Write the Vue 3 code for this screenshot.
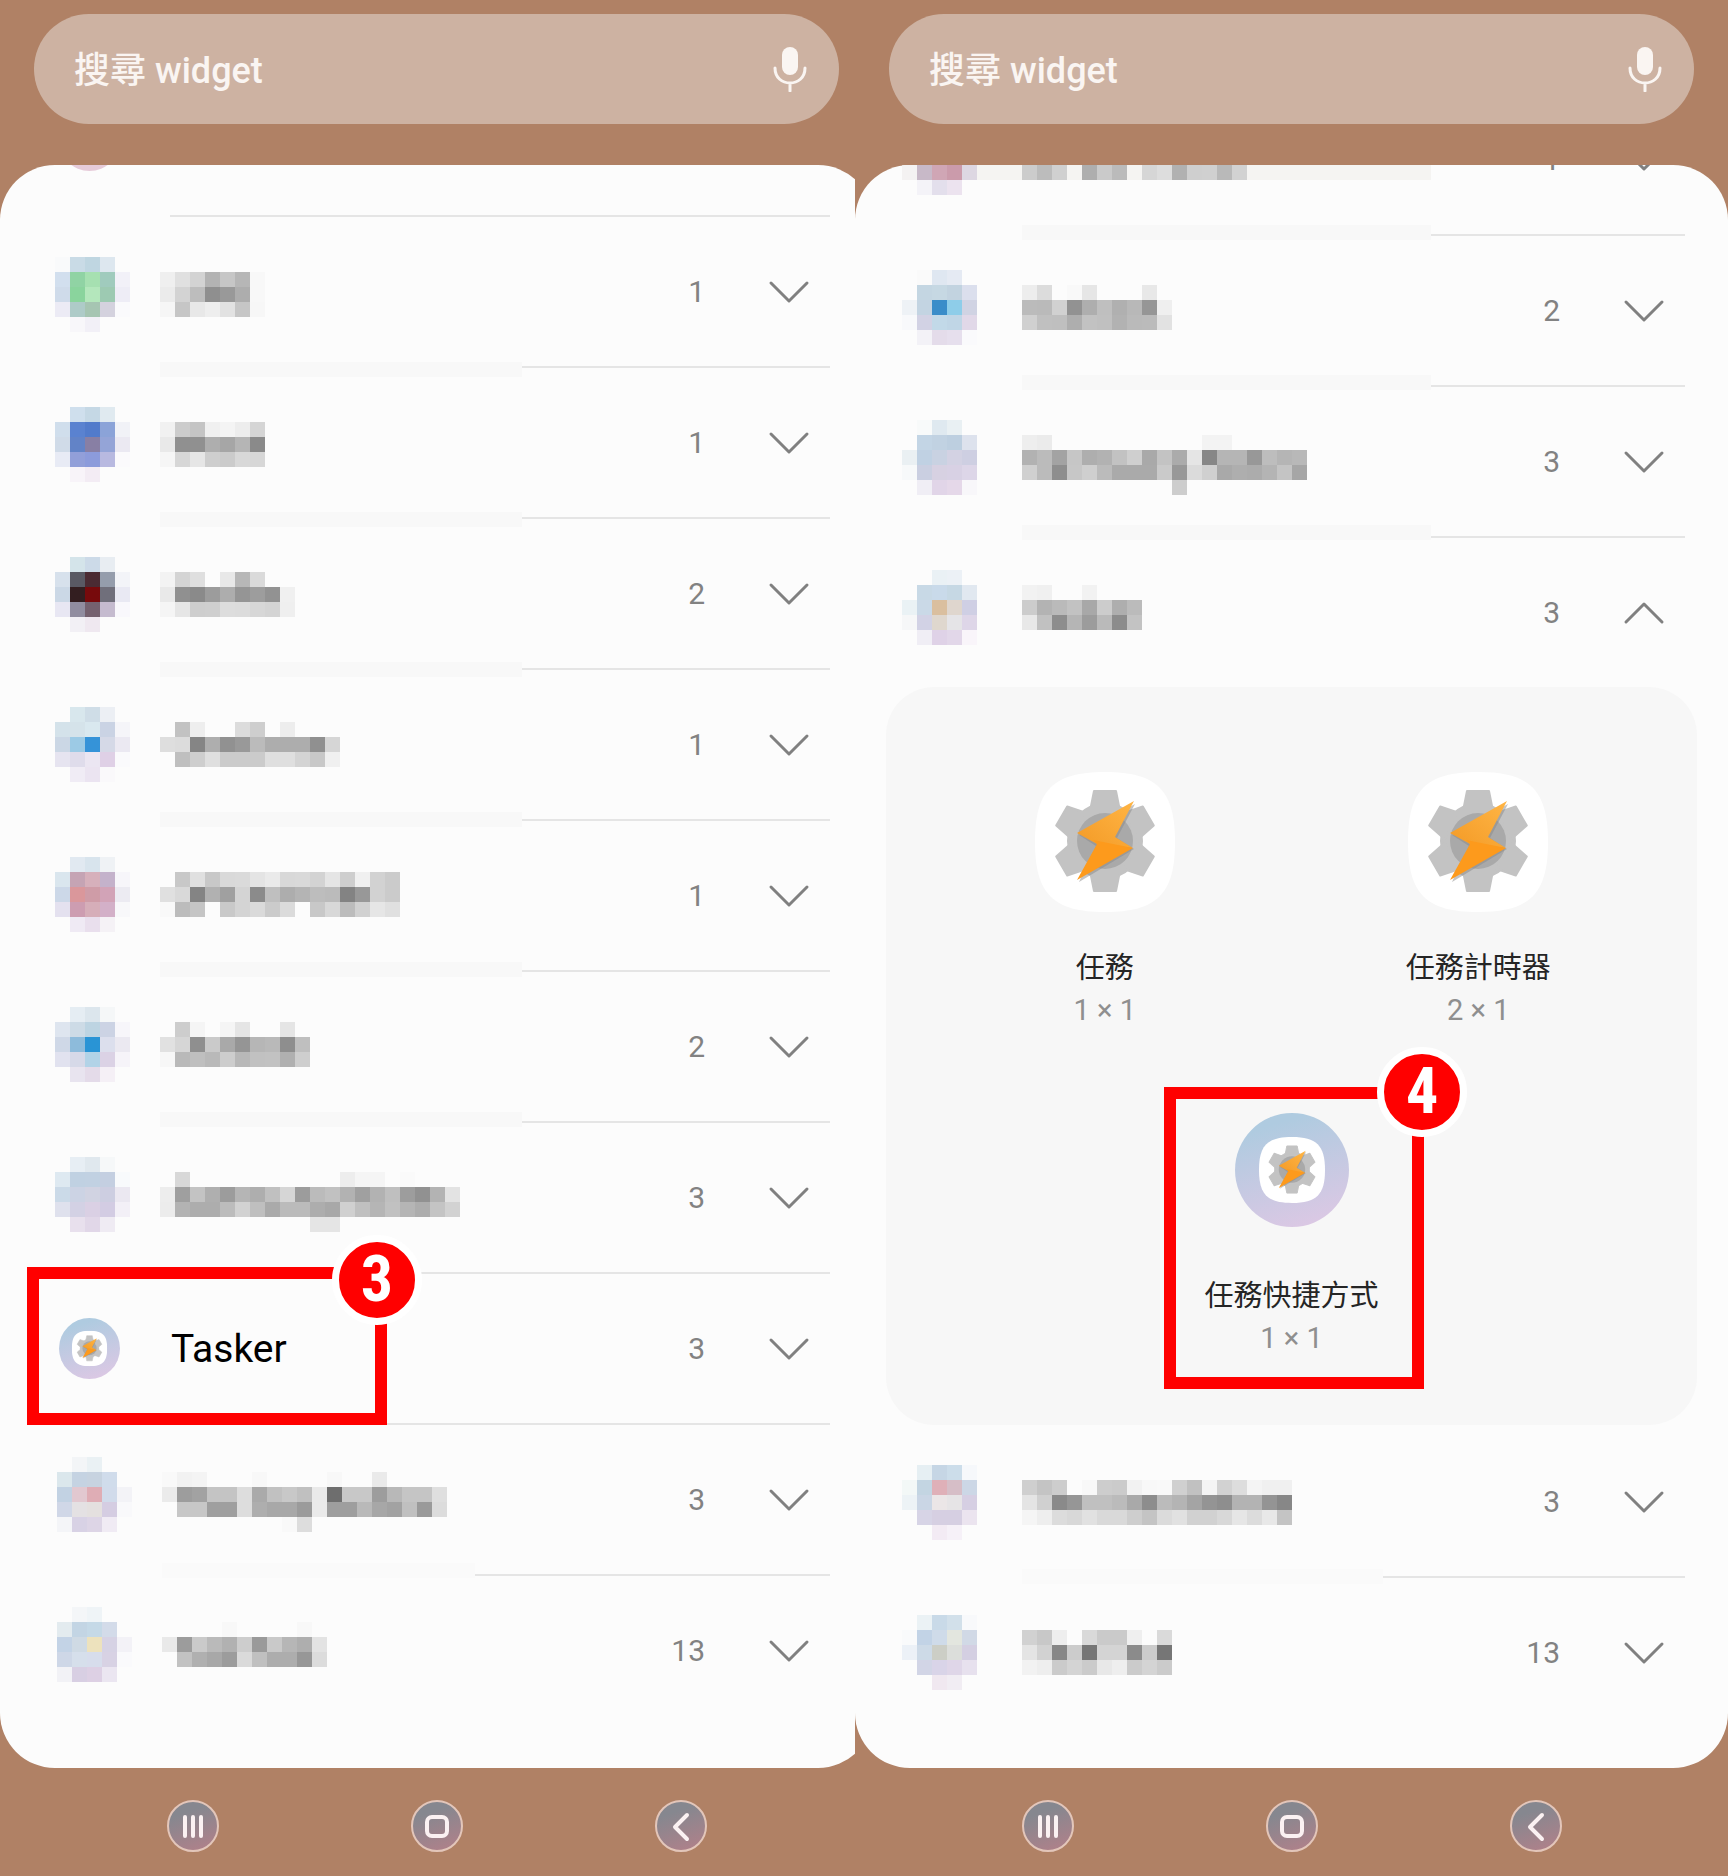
<script setup>
const CELL = 15

// Colour rows for the pixelated app icons; "-" leaves a cell empty.
// Names use two-digit grey levels; ".." leaves a cell empty.
const leftRows = [
  { count: '', art: 'plain' },
  {
    count: 1, top: 42,
    icon: ['f9fafb c9dbe6 bfd6e1 dde7ef -', 'd2dfee 90d3a4 a6e0b1 a0cbbd f2f1f8', 'cfdbea 8ad49d b4e7bc 9dcab2 eeedf6', 'ecebf5 aecbc8 a6c5b2 d4d2de fafafc', '- f8f7fa f2f0f7 - -'],
    name: ['ef e0 d3 b3 c6 b6 f8', 'eb d3 bd 8f 99 ad f8', 'f6 c6 e8 ee e2 c6 f7'],
  },
  {
    count: 1, top: 41, strip: -4,
    icon: ['- cfdfed c5d8e5 e0eaf0 -', 'd0deec 5a82d0 527bcb 8ba3d8 f1f2f7', 'd0dbe8 6283c7 887fa4 94a4d7 ebe9f2', 'e8ebf5 929fd9 8c9bdb b8b9e0 fbfafc', '- f8f4f9 f3ecf4 - -'],
    name: ['f1 cc c4 f0 f4 ed d5', 'e9 90 90 ae a6 b5 8a', 'f6 d7 e6 ce cb d8 d7'],
  },
  {
    count: 2, top: 40, strip: -5,
    icon: ['- d4e4ea ccdae8 e8edf2 -', 'd7e1ec 595963 4b2b33 959dac f3f4f8', 'cbd8e6 331e20 770a0c 706f7b e9e9f3', 'e8e7f3 918da0 75616f c5bbcf f9f8fc', '- f2f0f5 efe8f0 - -'],
    name: ['f3 d4 df .. e8 b7 da', 'e9 90 8a 9c ad 95 9d 92 f0', 'f5 e6 ce cf dd dc d7 d4 ef'],
  },
  {
    count: 1, top: 39, strip: -6,
    icon: ['- d8e7ed cfdde7 eceff4 -', 'd4e2ea d5e3ea d9e8ef cad3e4 f5f5f9', 'cbd7e5 9ccae5 3593d8 d5d9e7 ebe9f2', 'e6e4f0 dfdceb ebe6f2 dfd0e6 fafafc', '- f0ecf5 ebe4f1 faf9fb -'],
    name: ['.. c2 ee .. .. dc ce .. ed', 'de dc 85 ae 91 99 bb ad ad ad 90 d6', '.. bf ce df cb cb cb df df d4 c8 f0'],
  },
  {
    count: 1, top: 38, strip: -7,
    icon: ['- e1e9f1 d8e4ed eff2f5 -', 'dae6ee c5a4b4 d6b0bb c4b2cb f7f6fa', 'ccd8e8 da979b cf9ca7 d2a3b7 ecebf2', 'e4e1ef cd9db1 d6aeb9 d3b0c8 f8f8fa', '- efeaf4 e9dfed f5f2f6 -'],
    name: ['.. c8 e0 c8 d9 da e4 ea d8 d9 d3 e5 ce f0 d2 cb', 'e0 d9 84 b1 a0 d4 8b bf ad b4 bd bb 83 98 d2 cb', 'f9 bc c5 .. c9 d4 da cb db .. c8 d8 bc d1 e6 e0'],
  },
  {
    count: 2, top: 37, strip: -8,
    icon: ['- e5edf3 dce6ed f5f7f8 -', 'dee5ef cddbe6 bdd4e2 ccd3e4 f7f6fa', 'cfd8e7 8dbbdb 2994d5 dcdfed ebe9f1', 'e1e2ef d6d9e8 b2d3e7 dbd2e5 f6f4f9', '- e8e4ef e4dbe9 f5f0f6 -'],
    name: ['.. cd f5 .. f5 e5 .. .. e5', 'e1 d6 8f ca a9 95 b6 b9 8e bf', 'f7 b9 bf b9 cd b8 c1 c2 b0 ce'],
  },
  {
    count: 3, top: 36, strip: -9,
    icon: ['- e7eef4 e0e8ee f6f8f9 -', 'dee9f1 c0d1e2 c1d1e2 c4cfe1 f8fafc', 'cbdae8 ccd3e4 d1d3e2 cdcee1 ebe8f1', 'dfe1ed d3d1e4 dad0e4 d3cce3 f3f0f7', '- e8e0ed e1d7e8 efebf3 -'],
    name: ['.. d8 .. .. .. .. .. .. .. .. .. .. ed f5 f5 .. fa', 'ed 9f c3 af 9c b5 ae c0 d6 9c bb c1 b2 a0 b2 bf 9d 91 b3 e3', 'ec b3 ad ad bc d2 bf aa bb bb ad a8 d0 c0 b5 c1 b5 ad c4 d2', '.. .. .. .. .. .. .. .. .. .. e5 e5'],
  },
  { count: 3, label: 'Tasker', art: 'tasker', step: 3 },
  {
    count: 3, top: 34, x: 2,
    icon: ['- f3f5f7 eaf1f4 - -', 'dbe7ec c5d3e2 c7d3e0 d0dceb -', 'c2d2e3 e2c8d0 dfadb5 d1dbeb f3f3f7', 'd0d7e7 e4e1e3 e4e0df d5cde2 f9f9fb', 'f4f5f8 d8d2e5 ddd5e6 f0ebf4 -'],
    name: ['f9 f2 f4 .. .. .. f8 .. .. .. .. f8 .. .. ea', 'eb 9d a2 c4 c4 dd aa c1 c8 c0 ea 6e c8 c8 9d b8 c5 c5 df', '.. c7 c7 9f 9f dd ae a8 a8 9b ea 9e 9e b9 a7 a2 c0 9a dc', '.. .. .. .. .. .. .. .. f9 dd'],
  },
  {
    count: 13, top: 33, x: 2, strip: -11, stripEnd: 475,
    icon: ['- f4f6f8 eff4f7 - -', 'e3ebef c3d5e4 c5d9e7 d3dbe9 -', 'c3d3e6 cfdae4 ede2bd d6d2e4 f3f2f7', 'ced7e7 d6dfeb d7ddec d8d2e4 fafafc', 'f2f2f6 d8cfe3 ddd0e4 ebe6f1 -'],
    name: ['.. .. .. .. f8 .. .. .. .. f8', 'e9 9c ca ba b1 cd 9a c9 b6 ae e3', '.. c2 b0 a8 9c da c0 ad ad 97 dc'],
  },
]

const rightRows = [
  {
    count: 1, top: 82, nameTop: 82, band: true,
    icon: ['f4f2f2 c8b9c8 d0a6b5 cb9bab ddd7e2', '- f4f3f8 e3dfec ece3ef -'],
    name: ['cc bc d0 .. ae ca bb .. d6 dd b1 cf d0 b9 d2'],
  },
  {
    count: 2, top: 36, strip: -9,
    icon: ['- fafafa dfe7f1 e5eaf3 -', '- c4d6e2 c6d8e3 c2d3e0 dbdfed', 'eef2f6 c3d4e2 3a8dc9 8ecde9 d0d3e3', 'f8f9fb d2d2e4 c2d9e8 c0d6e6 e1d8e8', '- f3f2f7 e4dcea e6dfed fafafc'],
    name: ['ed dc .. f9 e6 .. .. .. e8', 'bb ba d1 92 ae bf b0 b8 96 ef', 'd0 c0 bf ae c2 c0 b2 ba bb e2'],
  },
  {
    count: 3, top: 35, strip: -10,
    icon: ['- f8fafa dfe9f0 e9f0f3 -', '- c3d5e5 c1d2e2 bdcfe0 dde2ed', 'eaf0f3 c0d1e3 c9d2e2 d3d2e3 cecfe2', 'f7f9fa cacfe1 d7d1e2 d8d1e4 ddd6e8', '- f0eef5 e1d5e8 e5d8e9 f8f7fa'],
    name: ['ee eb .. .. .. .. .. .. .. .. .. .. f3 f3', 'b2 bb a3 c6 ae b2 c2 cf a9 c3 ab e5 87 b5 b5 98 bd b5 b8', 'd0 bb 8e c7 cf bb aa aa aa ca 98 db d0 a9 ae ac b4 c4 a6', '.. .. .. .. .. .. .. .. .. .. cd'],
  },
  {
    count: 3, top: 34, strip: -11, open: true,
    icon: ['- - eaf1f5 ecf1f6 -', '- c8d9e6 c9daea c6d8e4 e1e8f0', 'eaf2f5 cad9e7 dabf9f dfd6ce cfcfe4', 'f6f7f8 d2d2e5 dfd7ce e5e4e7 ded6e8', '- f0eef5 dfd2e7 e2d7e9 f9f5fa'],
    name: ['f2 f0 .. .. f2', 'cc b3 ba c2 a8 cc ae bb', 'e8 c1 8d b5 9c ba 8c c3'],
  },
  {
    count: 3, top: 40, bare: true,
    icon: ['- e6eff3 c6d6e5 ccddea f6f8fb', 'f3f8f7 c3d5e2 dfb0b8 d6bec7 ccd7e6', 'edf3f6 cad6e5 ebe6e7 e6e4e6 d6cfe3', '- d7d4e6 d6cfe2 d6cfe2 ebe4ef', '- - f3ebf4 f6f1f8 -'],
    name: ['cf c4 cd .. f8 cd cb f2 f8 f9 d0 c1 f4 d2 dd f4 f0 f0', 'e4 d0 8a 96 c0 c0 bb a9 8d bb b4 a4 94 8e b3 b3 94 87', 'f5 ee dc d8 e1 d9 d9 ce c4 db e1 d1 d1 d8 e6 dc e8 c4'],
  },
  {
    count: 13, top: 39, strip: -7, stripEnd: 528,
    icon: ['- ebf2f5 c9dae8 d2e0ea f8f9fb', 'f9fafb c2d3e6 cfdbe9 e3e6df d1d9e6', 'ecf1f7 cddae7 cccec6 dcdedb d4cfe2', '- d2d5e6 d9d4e8 dfd6e8 e7e1ee', '- - f0e8f0 f1edf3 -'],
    name: ['d1 c8 ee .. d9 ca ca ef .. da', 'e4 d2 87 cc 76 d4 d4 8b cc 76', 'f2 ee cb d4 cb e8 ee cb d4 cb'],
  },
]

const widgets = [
  { label: '任務', size: '1 × 1' },
  { label: '任務計時器', size: '2 × 1' },
  { label: '任務快捷方式', size: '1 × 1', round: true, step: 4 },
]

const screens = [
  { id: 'left', rows: leftRows, iconX: 55, nameX: 160, stripEnd: 522 },
  { id: 'right', rows: rightRows, iconX: 47, nameX: 167, stripEnd: 576 },
]

function cells(lines, x, y, toColor) {
  return lines.flatMap((line, r) =>
    line.split(' ').flatMap((token, c) =>
      token === '-' || token === '..' ? [] : [{ x: x + c * CELL, y: y + r * CELL, w: CELL, h: CELL, fill: toColor(token) }]
    )
  )
}

function mosaic(row, screen) {
  if (!row.icon) return []
  const dx = row.x || 0
  const out = []
  if (row.strip) {
    const x = screen.nameX + dx
    const end = row.stripEnd || screen.stripEnd
    out.push({ x, y: row.strip, w: end - x, h: CELL, fill: row.stripEnd ? '#fafafa' : '#f8f8f8' })
  }
  if (row.band) out.push({ x: screen.iconX, y: row.top, w: screen.stripEnd - screen.iconX, h: CELL, fill: '#f5f4f2' })
  return out.concat(
    cells(row.icon, screen.iconX + dx, row.top, (t) => '#' + t),
    cells(row.name, screen.nameX + dx, row.nameTop || row.top + CELL, (t) => '#' + t + t + t)
  )
}
</script>

<template>
  <svg class="defs" aria-hidden="true">
    <defs>
      <linearGradient id="bolt-top" x1="0" y1="1" x2="1" y2="0">
        <stop offset="0" stop-color="#f39a26" />
        <stop offset="1" stop-color="#ffb545" />
      </linearGradient>
      <linearGradient id="halo" x1="0.3" y1="0" x2="0.6" y2="1">
        <stop offset="0.1" stop-color="#afcbe0" />
        <stop offset="1" stop-color="#dbc8e4" />
      </linearGradient>
      <symbol id="tasker-tile" viewBox="0 0 140 140">
        <path d="M70 0C122 0 140 18 140 70C140 122 122 140 70 140C18 140 0 122 0 70C0 18 18 0 70 0Z" fill="#fff" />
        <g fill="#c3c3c3" stroke="#c3c3c3" stroke-width="2" stroke-linejoin="round">
          <circle cx="70" cy="69" r="37" />
          <path v-for="a in 6" :key="a" d="M59 19H81L85 39H55Z" :transform="`rotate(${a * 60} 70 69)`" />
        </g>
        <circle cx="70" cy="69" r="28" fill="#a9a9a9" />
        <path d="M100 32L82 66L99 77L44 110L61 74L44 63Z" fill="#8a8a8a" opacity="0.5" />
        <path d="M99 29L42 61L62 72L98 76L80 65Z" fill="url(#bolt-top)" />
        <path d="M58 68L98 76L42 108L62 72Z" fill="#fd9a1c" />
      </symbol>
      <symbol id="tasker-round" viewBox="0 0 114 114">
        <circle cx="57" cy="57" r="57" fill="url(#halo)" />
        <use href="#tasker-tile" x="24" y="24" width="66" height="66" />
      </symbol>
    </defs>
  </svg>

  <main class="board">
    <section v-for="screen in screens" :key="screen.id" class="screen">
      <div class="phone" :class="screen.id">
        <header class="top">
          <label class="search">
            <input type="text" placeholder="搜尋 widget" aria-label="搜尋 widget" />
            <svg class="mic" viewBox="0 0 36 46" aria-hidden="true">
              <rect x="10" y="1" width="16" height="28" rx="8" fill="#faf5f2" />
              <path d="M3 22C3 42 33 42 33 22M18 37V45" fill="none" stroke="#faf5f2" stroke-width="3" stroke-linecap="round" />
            </svg>
          </label>
        </header>

        <div class="sheet">
          <ul class="list">
            <li v-for="(row, i) in screen.rows" :key="i" class="item" :class="{ bare: row.bare }">
              <button class="row" type="button" :aria-expanded="row.open ? 'true' : 'false'" :aria-label="row.label">
                <span class="icon">
                  <svg v-if="row.art === 'tasker'" viewBox="0 0 114 114"><use href="#tasker-round" /></svg>
                  <svg v-else-if="row.art" viewBox="0 0 114 114"><circle cx="57" cy="57" r="57" fill="#e6cbd9" /></svg>
                </span>
                <span class="name">{{ row.label }}</span>
                <span class="count">{{ row.count }}</span>
                <svg class="chevron" viewBox="0 0 44 24" aria-hidden="true">
                  <path :d="row.open ? 'M4 21L22 3L40 21' : 'M4 3L22 21L40 3'" />
                </svg>
              </button>
              <svg v-if="row.icon" class="mosaic" shape-rendering="crispEdges" aria-hidden="true">
                <rect v-for="(c, k) in mosaic(row, screen)" :key="k" :x="c.x" :y="c.y" :width="c.w" :height="c.h" :fill="c.fill" />
              </svg>
              <div v-if="row.step" class="mark row-mark"><span class="step">{{ row.step }}</span></div>

              <ul v-if="row.open" class="widgets">
                <li v-for="w in widgets" :key="w.label" class="widget">
                  <span class="tile">
                    <svg v-if="w.round" class="round" viewBox="0 0 114 114"><use href="#tasker-round" /></svg>
                    <svg v-else class="square" viewBox="0 0 140 140"><use href="#tasker-tile" /></svg>
                  </span>
                  <span class="label">{{ w.label }}</span>
                  <span class="size">{{ w.size }}</span>
                  <div v-if="w.step" class="mark widget-mark"><span class="step">{{ w.step }}</span></div>
                </li>
              </ul>
            </li>
          </ul>
        </div>

        <nav class="nav">
          <button type="button" aria-label="Recents">
            <svg viewBox="0 0 48 48"><path d="M16 15V34M24 15V34M32 15V34" /></svg>
          </button>
          <button type="button" aria-label="Home">
            <svg viewBox="0 0 48 48"><rect x="14" y="15" width="20" height="19" rx="5" /></svg>
          </button>
          <button type="button" aria-label="Back">
            <svg viewBox="0 0 48 48"><path d="M30 13L18 25L30 37" /></svg>
          </button>
        </nav>
      </div>
    </section>
  </main>
</template>

<style>
body {
  margin: 0;
  background: #b08165;
}
</style>

<style scoped>
.defs {
  position: absolute;
  width: 0;
  height: 0;
}
.board {
  display: grid;
  grid-template-columns: 855fr 873fr;
  font-family: Roboto, "Noto Sans CJK TC", sans-serif;
  background: #b08165;
}
.screen {
  display: flex;
  min-width: 0;
  overflow: hidden;
}
.phone {
  display: flex;
  flex: none;
  flex-direction: column;
  width: 100%;
}
.phone.left {
  width: calc(100% + 18px);
}
.top {
  padding: 14px 34px 41px;
}
.search {
  display: flex;
  align-items: center;
  height: 110px;
  padding: 0 31px 0 40px;
  box-sizing: border-box;
  border-radius: 55px;
  background: #cdb2a2;
}
.search input {
  flex: 1;
  min-width: 0;
  padding: 4px 0 0;
  border: 0;
  outline: 0;
  background: none;
  color: #faf5f2;
  font: 500 36px/48px Roboto, "Noto Sans CJK TC", sans-serif;
}
.search input::placeholder {
  color: #faf5f2;
  opacity: 1;
}
.mic {
  width: 36px;
  height: 46px;
}
.sheet {
  flex: 1;
  overflow: hidden;
  padding-bottom: 41px;
  border-radius: 55px;
  background: #fcfcfc;
}
.list,
.widgets {
  margin: 0;
  padding: 0;
  list-style: none;
}
.left .list {
  margin-top: -101px;
}
.right .list {
  margin-top: -82px;
}
.item {
  position: relative;
}
.item::before {
  content: "";
  position: absolute;
  top: 0;
  left: 170px;
  right: 43px;
  height: 2px;
  background: #e5e5e5;
}
.item.bare::before {
  display: none;
}
.row {
  display: flex;
  align-items: center;
  box-sizing: border-box;
  width: 100%;
  height: 151px;
  padding: 2px 62px 0 59px;
  border: 0;
  background: none;
  font: inherit;
  text-align: left;
}
.icon {
  width: 61px;
  height: 61px;
}
.icon svg {
  display: block;
  width: 61px;
  height: 61px;
}
.name {
  flex: 1;
  padding-left: 51px;
  font-size: 39px;
  line-height: 48px;
  color: #000;
}
.count {
  margin-right: 62px;
  font-size: 30px;
  line-height: 36px;
  color: #828282;
}
.chevron {
  width: 44px;
  height: 24px;
}
.chevron path {
  fill: none;
  stroke: #808080;
  stroke-width: 3;
  stroke-linecap: round;
  stroke-linejoin: round;
}
.mosaic {
  position: absolute;
  top: 0;
  left: 0;
  width: 600px;
  height: 151px;
  overflow: visible;
  pointer-events: none;
}
.widgets {
  display: flex;
  flex-wrap: wrap;
  justify-content: center;
  row-gap: 69px;
  margin: 0 31px;
  padding: 85px 32px 66px;
  border-radius: 48px;
  background: #f7f7f7;
}
.widget {
  position: relative;
  display: flex;
  flex-direction: column;
  align-items: center;
  width: 50%;
}
.tile {
  display: flex;
  align-items: center;
  justify-content: center;
  height: 140px;
  margin-bottom: 35px;
}
.square {
  width: 140px;
  height: 140px;
}
.round {
  width: 114px;
  height: 114px;
}
.label,
.size {
  font-size: 29px;
  line-height: 42px;
}
.label {
  color: #252525;
}
.size {
  color: #8f8f8f;
}
.mark {
  position: absolute;
  z-index: 2;
  box-sizing: border-box;
  border: 12px solid #f00;
  pointer-events: none;
}
.row-mark {
  top: -5px;
  left: 27px;
  width: 360px;
  height: 158px;
}
.widget-mark {
  inset: -13px 54px -30px 59px;
}
.step {
  position: absolute;
  display: flex;
  align-items: center;
  justify-content: center;
  width: 76px;
  height: 76px;
  border: 7px solid #fff;
  border-radius: 50%;
  background: #f00;
  color: #fff;
  font: 700 64px/76px "Roboto Condensed", "Open Sans Condensed", "Noto Sans Condensed", Roboto, sans-serif;
}
.row-mark .step {
  top: -44px;
  right: -47px;
}
.widget-mark .step {
  top: -52px;
  right: -55px;
}
.nav {
  display: flex;
  justify-content: center;
  gap: 192px;
  padding: 32px 0 25px;
}
.nav button {
  width: 52px;
  height: 52px;
  padding: 0;
  border: 2px solid #e3c6ba;
  border-radius: 50%;
  background: linear-gradient(160deg, #86878f 25%, #ad818a 90%);
}
.nav svg {
  display: block;
  width: 48px;
  height: 48px;
  fill: none;
  stroke: #fbf1f2;
  stroke-width: 4;
  stroke-linecap: round;
  stroke-linejoin: round;
}
</style>
